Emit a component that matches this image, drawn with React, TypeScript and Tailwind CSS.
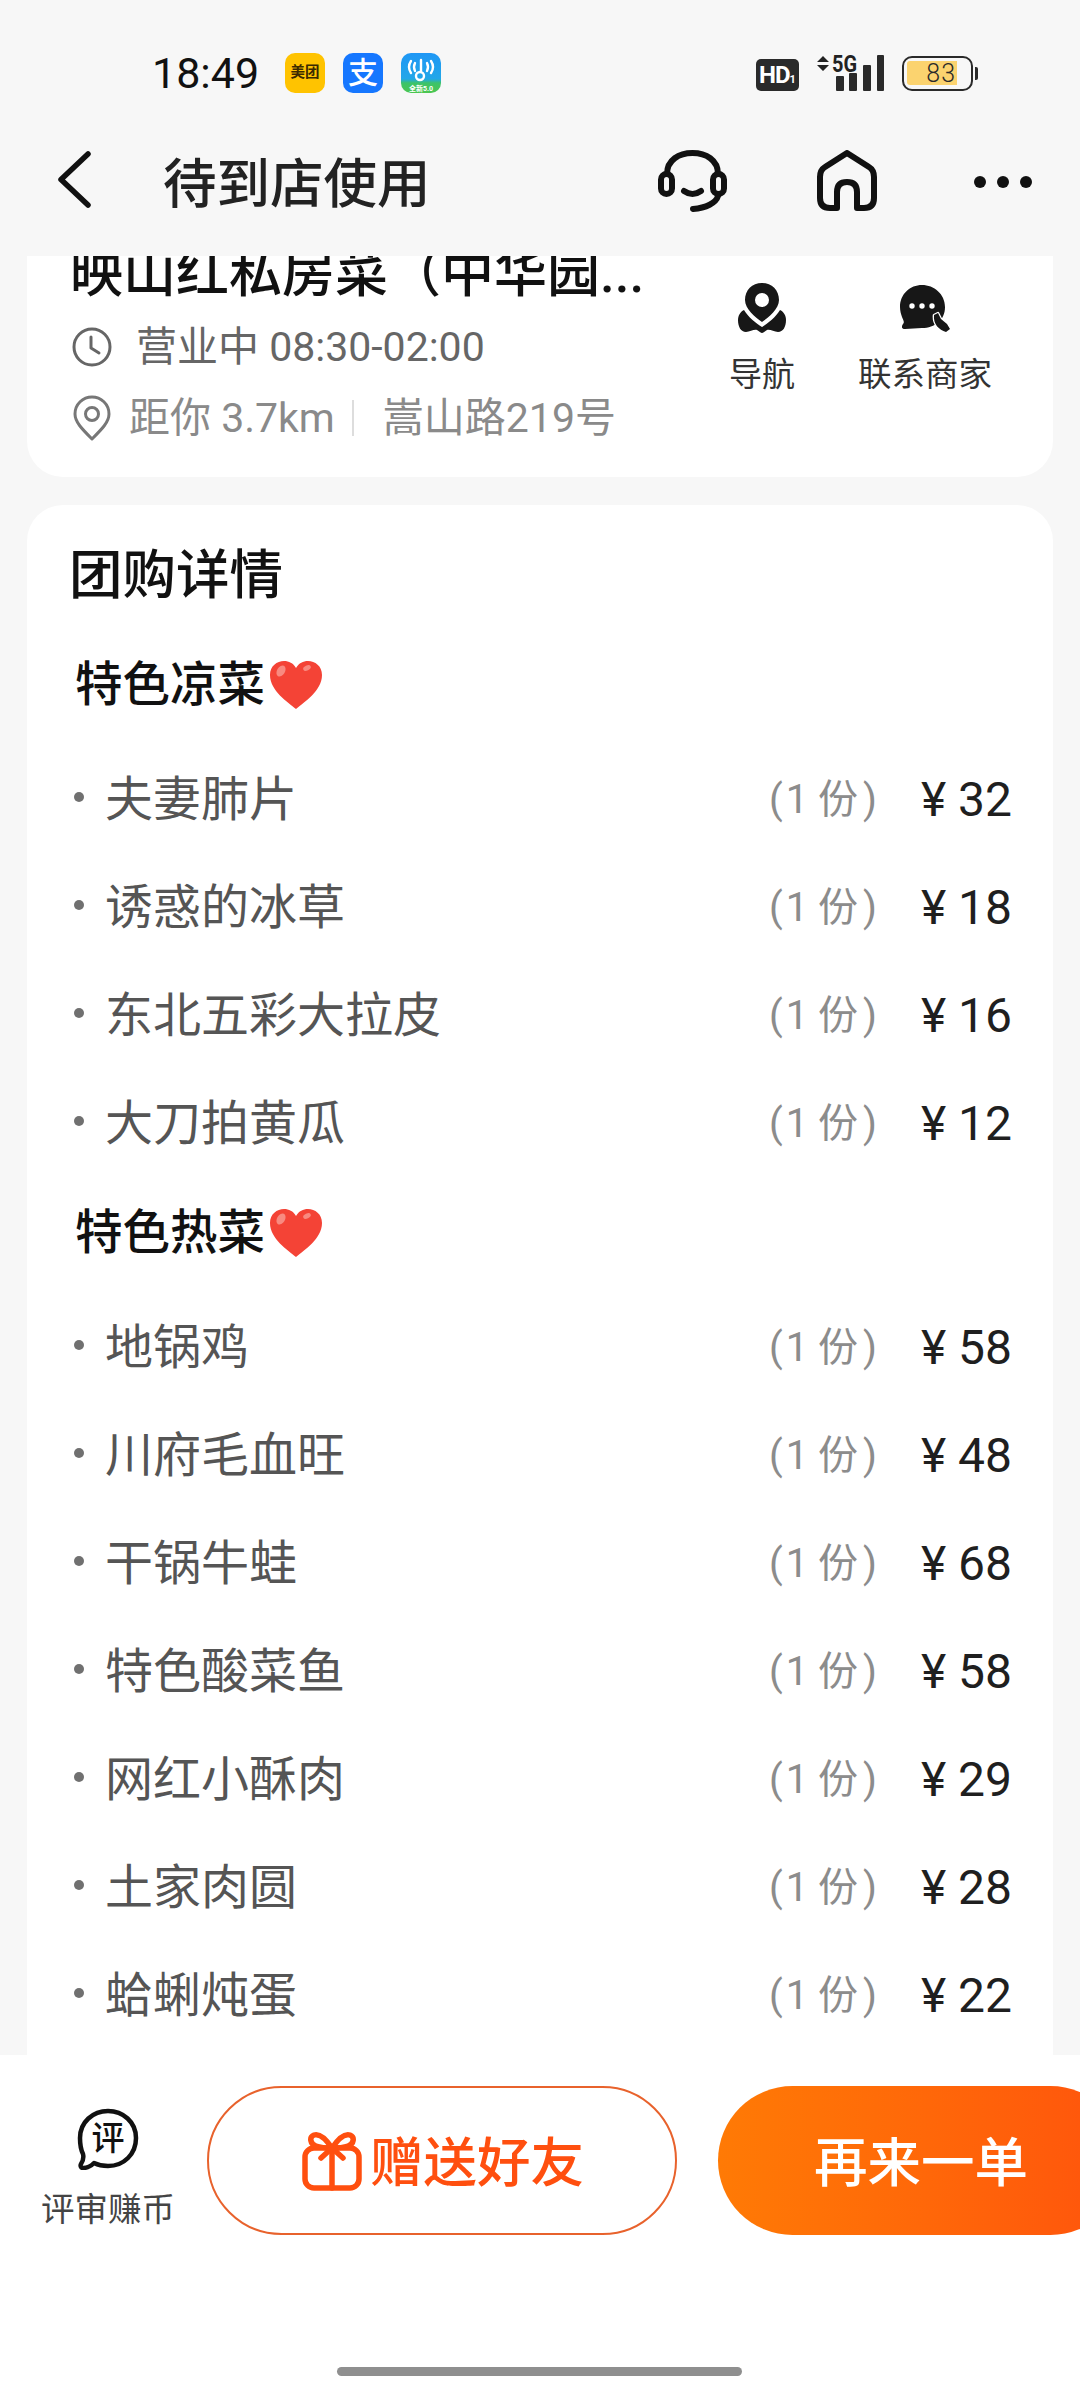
import React from "react";

const cold = ["夫妻肺片|32", "诱惑的冰草|18", "东北五彩大拉皮|16", "大刀拍黄瓜|12"];
const hot = ["地锅鸡|58", "川府毛血旺|48", "干锅牛蛙|68", "特色酸菜鱼|58", "网红小酥肉|29", "土家肉圆|28", "蛤蜊炖蛋|22"];

function Heart() {
  return (
    <svg width="56" height="50" viewBox="0 0 56 50" className="shrink-0 ml-[3px]">
      <path d="M28 49 C20 42 2 31 2 15 C2 6 9 1 16 1 C21 1 25 3 28 8 C31 3 35 1 40 1 C47 1 54 6 54 15 C54 31 36 42 28 49 Z" fill="#f44336" />
      <ellipse cx="13" cy="11" rx="4" ry="6" transform="rotate(30 13 11)" fill="#f88a80" />
      <ellipse cx="39" cy="8" rx="4" ry="2.5" transform="rotate(-25 39 8)" fill="#f88a80" />
    </svg>
  );
}

function Row({ v }: { v: string }) {
  const [name, price] = v.split("|");
  return (
    <div className="h-[108px] flex items-center pl-[47px] pr-[41px]">
      <span className="w-[10px] h-[10px] rounded-full bg-[#707070] mr-[21px] -mt-[6px] shrink-0" />
      <span className="text-[48px] leading-none text-[#555555] flex-1">{name}</span>
      <span className="text-[40px] leading-none text-[#8c8c8c] flex">
        <span className="mr-[3px]">(</span>
        <span>1 份</span>
        <span className="ml-[5px]">)</span>
      </span>
      <span className="text-[48px] leading-none text-[#1f1f1f] w-[135px] text-right whitespace-pre -mt-[1px]">¥ {price}</span>
    </div>
  );
}

function Section({ title, items, cls }: { title: string; items: string[]; cls: string }) {
  return (
    <div className={cls}>
      <div className="h-[88px] mb-[17px] flex items-center pl-[48px]">
        <span className="text-[47.5px] leading-none font-medium text-[#111111] mt-[1px]">{title}</span>
        <Heart />
      </div>
      {items.map((i) => (
        <Row key={i} v={i} />
      ))}
    </div>
  );
}

export default function App() {
  return (
    <div className="w-[1080px] h-[2400px] overflow-hidden bg-[#f7f7f7] flex flex-col font-[Roboto,'Noto_Sans_CJK_SC',sans-serif]">
      {/* status bar */}
      <div className="h-[90px] shrink-0 pt-[53px] pl-[152px]">
        <div className="flex items-center h-[40px] w-full">
          <span className="text-[43px] leading-none text-[#111111] w-[106px] whitespace-nowrap">18:49</span>
          <div className="ml-[27px] w-[40px] h-[40px] rounded-[10px] bg-[#ffc300] flex items-center justify-center text-[14.5px] font-bold text-[#3b2a00] leading-none whitespace-nowrap">美团</div>
          <div className="ml-[18px] w-[40px] h-[40px] rounded-[10px] bg-[#1677ff] flex items-center justify-center text-[30px] font-medium text-white leading-none">支</div>
          <svg className="ml-[18px]" width="40" height="40" viewBox="0 0 40 40">
            <defs>
              <linearGradient id="w" x1="0" y1="0" x2="0" y2="1">
                <stop offset="0" stopColor="#1f97f5" />
                <stop offset="0.65" stopColor="#22a7e8" />
                <stop offset="0.75" stopColor="#3cc36a" />
                <stop offset="1" stopColor="#4cc64f" />
              </linearGradient>
            </defs>
            <rect width="40" height="40" rx="10" fill="url(#w)" />
            <g fill="none" stroke="#fff" strokeWidth="2.4" strokeLinecap="round">
              <path d="M10 8 Q6 14 10 20" />
              <path d="M14 10 Q12 14 14 18" />
              <path d="M30 8 Q34 14 30 20" />
              <path d="M26 10 Q28 14 26 18" />
              <path d="M20 7 V18" />
              <circle cx="19" cy="23" r="4" />
            </g>
            <text x="20" y="38" textAnchor="middle" fontSize="7" fontWeight="700" fill="#fff">全新5.0</text>
          </svg>

          <div className="ml-auto mr-[102px] flex items-center h-[40px]">
            <div className="w-[43px] h-[32px] rounded-[5px] bg-[#2a2a2a] text-white font-bold flex items-baseline justify-center leading-none mt-[4px]">
              <span className="text-[24px] tracking-[-1px] pt-[4px]">HD</span>
              <span className="text-[11px]">1</span>
            </div>
            <svg className="ml-[18px]" width="68" height="36" viewBox="0 0 68 36">
              <path d="M6 1 L12 7 H0 Z M6 16 L12 10 H0 Z" fill="#222" />
              <text x="15" y="17" fontSize="23" fontWeight="700" fill="#222" textLength="25" lengthAdjust="spacingAndGlyphs">5G</text>
              <rect x="19" y="21" width="8" height="15" rx="1" fill="#2a2a2a" />
              <rect x="32" y="18" width="8" height="18" rx="1" fill="#2a2a2a" />
              <rect x="46" y="10" width="8" height="26" rx="1" fill="#2a2a2a" />
              <rect x="60" y="0" width="7" height="36" rx="1" fill="#2a2a2a" />
            </svg>
            <div className="ml-[17px] w-[71px] h-[35px] rounded-[10px] border-[2.5px] border-[#2a2a2a] flex items-center pl-[3px]">
              <div className="w-[50px] h-[24px] bg-[#fbd36f] rounded-l-[3px] flex items-center justify-end pr-[1px] text-[25px] font-light leading-none text-[#2a2a2a] tracking-[1px]">83</div>
            </div>
            <div className="ml-[2px] w-[3px] h-[13px] rounded-r-[2px] bg-[#2a2a2a]" />
          </div>
        </div>
      </div>

      {/* nav */}
      <div className="h-[166px] shrink-0 flex items-start pl-[56px] pt-[60px]">
        <svg width="36" height="60" viewBox="0 0 36 60" fill="none" stroke="#111" strokeWidth="5.5" strokeLinecap="round" strokeLinejoin="round">
          <path d="M32 4 L5 29.5 L32 55" />
        </svg>
        <span className="ml-[71px] text-[53.5px] leading-[70px] text-[#222222] font-medium whitespace-nowrap">待到店使用</span>
        <svg className="ml-[227px]" width="70" height="62" viewBox="0 0 70 62" fill="none" stroke="#111" strokeWidth="6" strokeLinecap="round">
          <path d="M9 24 C9 10 21 3 34.5 3 C48 3 60 10 60 24" />
          <rect x="3" y="24" width="11" height="20" rx="5.5" />
          <rect x="55" y="24" width="11" height="20" rx="5.5" />
          <path d="M26 41 Q34.5 47 43 41" />
          <path d="M60 46 C58 53 48 58 35 59" />
        </svg>
        <svg className="ml-[88px]" width="62" height="62" viewBox="0 0 62 62" fill="none" stroke="#111" strokeWidth="6" strokeLinejoin="round">
          <path d="M31 3 L53 17 Q58 20 58 27 V48 Q58 58 48 58 H41 V42 Q41 32 31 32 Q21 32 21 42 V58 H14 Q4 58 4 48 V27 Q4 20 9 17 Z" />
        </svg>
        <div className="ml-[96px] mt-[26px] flex gap-[11px]">
          <span className="w-[12px] h-[12px] rounded-full bg-[#111]" />
          <span className="w-[12px] h-[12px] rounded-full bg-[#111]" />
          <span className="w-[12px] h-[12px] rounded-full bg-[#111]" />
        </div>
      </div>

      {/* content */}
      <div className="flex-1 min-h-0 overflow-hidden px-[27px]">
        <div className="h-[221px] bg-white rounded-b-[36px] overflow-hidden flex">
          <div className="flex-1 min-w-0 pl-[43px]">
            <div className="-mt-[8px] h-[52px] text-[53px] leading-[52px] font-medium text-[#111111] whitespace-nowrap">映山红私房菜（中华园...</div>
            <div className="mt-[23px] h-[48px] flex items-center">
              <svg width="42" height="42" viewBox="0 0 42 42" className="ml-[1px]" fill="none" stroke="#666" strokeWidth="3" strokeLinecap="round" strokeLinejoin="round">
                <circle cx="21" cy="21" r="18" />
                <path d="M20 11 V22 L28 27" />
              </svg>
              <span className="ml-[23px] text-[41px] leading-none text-[#666666] whitespace-nowrap">营业中 08:30-02:00</span>
            </div>
            <div className="mt-[23px] h-[48px] flex items-center">
              <svg width="40" height="46" viewBox="0 0 40 46" className="ml-[2px]" fill="none" stroke="#777" strokeWidth="3">
                <path d="M20 44 C10 34 3 27 3 19 C3 9 11 2 20 2 C29 2 37 9 37 19 C37 27 30 34 20 44 Z" strokeLinejoin="round" />
                <circle cx="20" cy="19" r="6.5" />
              </svg>
              <span className="ml-[17px] text-[41px] leading-none text-[#8a8a8a] whitespace-nowrap">距你 3.7km</span>
              <span className="ml-[17px] w-[2px] h-[36px] bg-[#dddddd]" />
              <span className="ml-[29px] text-[41px] leading-none text-[#8a8a8a] whitespace-nowrap">嵩山路219号</span>
            </div>
          </div>
          <div className="flex pr-[58px] pt-[27px] gap-[58px]">
            <div className="w-[70px] flex flex-col items-center">
              <svg width="50" height="50" viewBox="0 0 50 50" fill="#171717">
                <path fillRule="evenodd" d="M25 0 C15 0 8 7 8 17 C8 26 18 34 25 39 C32 34 42 26 42 17 C42 7 35 0 25 0 Z M25 10 A7 7 0 1 1 25 24 A7 7 0 0 1 25 10 Z" />
                <path d="M7 27 C11 34 19 40 25 44 C31 40 39 34 43 27 C47 29 49 33 49 37 C49 44 46 49 41 49 C37 49 33 46 30 47 C28 48 26 50 25 50 C24 50 22 48 20 47 C17 46 13 49 9 49 C4 49 1 44 1 37 C1 33 3 29 7 27 Z" />
              </svg>
              <span className="mt-[22px] text-[33px] leading-[40px] text-[#333333] whitespace-nowrap">导航</span>
            </div>
            <div className="w-[140px] flex flex-col items-center">
              <svg width="50" height="50" viewBox="0 0 50 50">
                <path d="M22 2 C34 2 45 11 45 24 C45 37 35 45 22 45 C16 45 11 46 5 46 C2 46 1 44 3 41 C5 39 3 37 2 34 C1 31 0 28 0 24 C0 11 10 2 22 2 Z" fill="#171717" />
                <circle cx="12" cy="23" r="2.7" fill="#fff" />
                <circle cx="22" cy="23" r="2.7" fill="#fff" />
                <circle cx="32" cy="23" r="2.7" fill="#fff" />
                <path d="M34 32 L38 30 L41 36 L47 41 L50 46 L46 49 C39 47 33 41 34 32 Z" fill="#171717" stroke="#fff" strokeWidth="2.5" paintOrder="stroke" strokeLinejoin="round" />
              </svg>
              <span className="mt-[22px] text-[33.5px] leading-[40px] text-[#333333] whitespace-nowrap">联系商家</span>
            </div>
          </div>
        </div>

        <div className="mt-[28px] bg-white rounded-t-[36px] pb-[40px]">
          <div className="h-[136px] flex items-center pl-[42px]">
            <span className="text-[53.5px] leading-none font-medium text-[#111111] mt-[6px]">团购详情</span>
          </div>
          <Section title="特色凉菜" items={cold} cls="" />
          <Section title="特色热菜" items={hot} cls="mt-[11px]" />
        </div>
      </div>

      {/* bottom bar */}
      <div className="h-[345px] shrink-0 bg-white relative overflow-hidden">
        <div className="flex items-start pt-[31px]">
          <div className="w-[207px] shrink-0 flex flex-col items-center pt-[22px] pl-[9px]">
            <svg width="62" height="62" viewBox="0 0 62 62">
              <path d="M31 3 C46 3 59 14 59 30 C59 46 47 58 31 58 C25 58 21 57 17 55 C14 58 10 60 6 60 C4 60 3 58 4 56 C6 53 7 50 6 46 C4 42 3 36 3 30 C3 14 16 3 31 3 Z" fill="none" stroke="#111" strokeWidth="4.5" strokeLinejoin="round" />
              <text x="31" y="42" textAnchor="middle" fontSize="33" fontWeight="500" fill="#111">评</text>
            </svg>
            <span className="mt-[20px] text-[33.5px] leading-[40px] text-[#444444] whitespace-nowrap">评审赚币</span>
          </div>
          <div className="w-[470px] h-[149px] shrink-0 rounded-full border-2 border-[#e8622c] flex items-center justify-center pl-[2px]">
            <svg width="60" height="60" viewBox="0 0 60 60" fill="none" stroke="#ff4f0f" strokeWidth="5.5" strokeLinecap="round" strokeLinejoin="round">
              <rect x="3" y="17" width="54" height="40" rx="9" />
              <path d="M30 17 V57" />
              <path d="M30 17 C24 8 18 2 12 4 C7 6 8 13 14 15 C20 17 26 17 30 17 Z" />
              <path d="M30 17 C36 8 42 2 48 4 C53 6 52 13 46 15 C40 17 34 17 30 17 Z" />
              <path d="M30 17 L19 27 M30 17 L41 27" />
            </svg>
            <span className="ml-[8px] mt-[6px] text-[53.5px] leading-none font-medium text-[#ff4f0f] whitespace-nowrap">赠送好友</span>
          </div>
          <div className="ml-[41px] w-[407px] h-[149px] shrink-0 rounded-full bg-gradient-to-r from-[#ff7a05] to-[#ff530c] flex items-center pl-[96px]">
            <span className="mt-[6px] text-[53.5px] leading-none font-medium text-white whitespace-nowrap">再来一单</span>
          </div>
        </div>
        <div className="absolute left-[337px] bottom-[24px] w-[405px] h-[9px] rounded-full bg-[#8f8f8f]" />
      </div>
    </div>
  );
}
